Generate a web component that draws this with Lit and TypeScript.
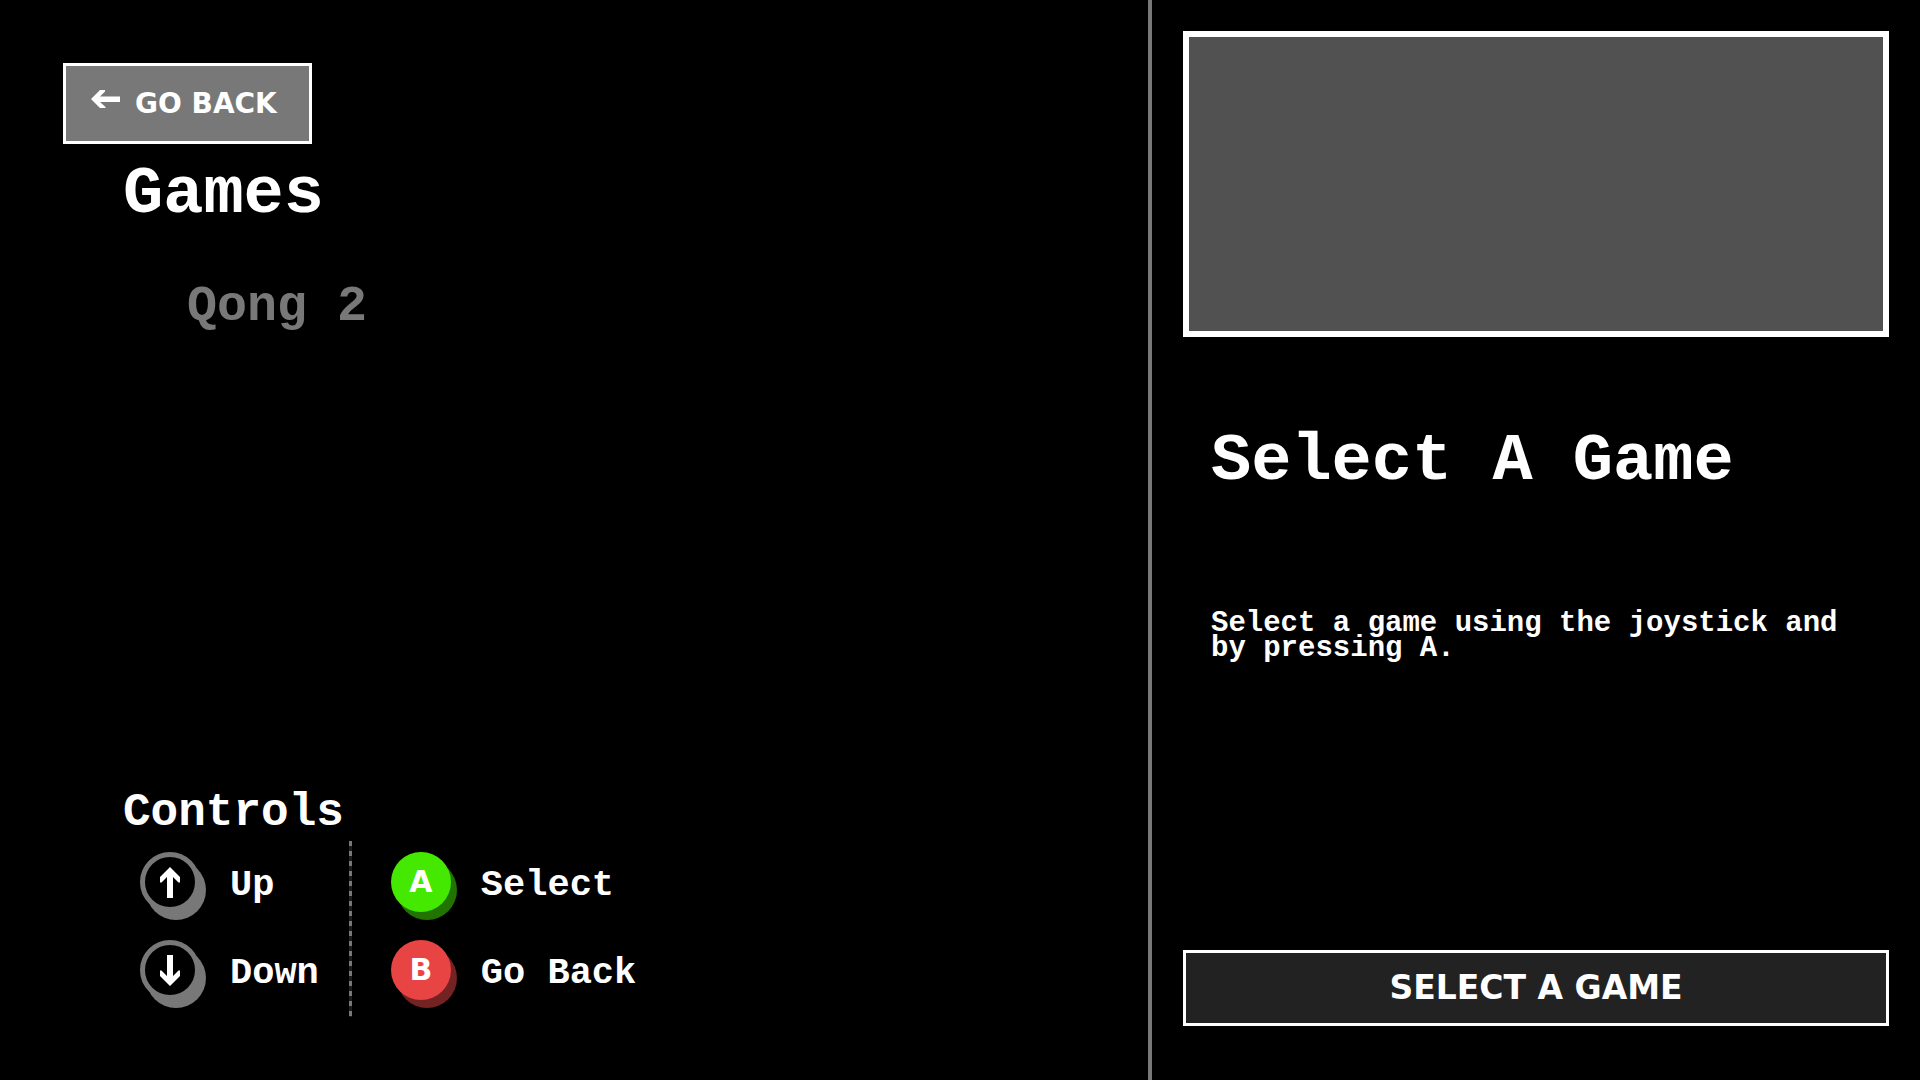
import { LitElement, html, css, svg } from "lit";
import { customElement, property } from "lit/decorators.js";

const upArrow = svg`<path d="M10 0 20 10V15.5H18.5L13 10V31H7V10L1.5 15.5H0V10Z" fill="#fff"/>`;

@customElement("control-hint")
class ControlHint extends LitElement {
  @property() kind = "up";
  @property() label = "";

  static styles = css`
    :host {
      display: flex;
      align-items: center;
      gap: 24px;
      height: 88px;
    }
    .key {
      box-sizing: border-box;
      display: grid;
      place-items: center;
      flex: none;
      width: 60px;
      height: 60px;
      margin: 0 6px 6px 0;
      border-radius: 50%;
      color: #fff;
      font: bold 30px/30px "DejaVu Sans", sans-serif;
    }
    .up,
    .down {
      background: #000;
      border: 5px solid #787878;
      box-shadow: 6px 8px 0 #787878;
    }
    .a {
      background: #45e800;
      box-shadow: 6px 8px 0 #227400;
    }
    .b {
      background: #e84444;
      box-shadow: 6px 8px 0 #742222;
    }
    .down svg {
      transform: rotate(180deg);
    }
    .label {
      white-space: nowrap;
    }
  `;

  render() {
    const arrow = this.kind === "up" || this.kind === "down";
    return html`
      <span class="key ${this.kind}">
        ${arrow
          ? html`<svg width="20" height="31" viewBox="0 0 20 31" aria-hidden="true">${upArrow}</svg>`
          : this.kind.toUpperCase()}
      </span>
      <span class="label">${this.label}</span>
    `;
  }
}

@customElement("app-root")
class AppRoot extends LitElement {
  static styles = css`
    :host {
      display: grid;
      grid-template-columns: minmax(0, 1fr) calc(40% + 4px);
      min-height: 100vh;
      background: #000;
      color: #fff;
      font: bold 37px/44px "Liberation Mono", monospace;
    }
    * {
      box-sizing: border-box;
    }
    h1,
    h2,
    p,
    ul {
      margin: 0;
      padding: 0;
      font-weight: bold;
    }
    .main {
      display: flex;
      flex-direction: column;
      align-items: flex-start;
      padding: 63px;
    }
    .button {
      display: flex;
      align-items: center;
      justify-content: center;
      margin: 0;
      border: 3px solid #fff;
      color: #fff;
      font-family: "DejaVu Sans", sans-serif;
      font-weight: bold;
      cursor: pointer;
    }
    .back {
      gap: 15px;
      height: 81px;
      padding: 0 32px 0 25px;
      background: #787878;
      font-size: 28px;
      line-height: 32px;
    }
    .back svg {
      margin-bottom: 10px;
    }
    .title {
      font-size: 67px;
      line-height: 64px;
    }
    .main .title {
      margin: 18px 0 0 60px;
    }
    .games {
      margin: 56px 0 0 124px;
      list-style: none;
    }
    .game {
      display: block;
      color: #787878;
      font-size: 50px;
      line-height: 50px;
      text-decoration: none;
    }
    .controls {
      margin: auto 0 0 60px;
    }
    .controls h2 {
      margin-bottom: 5px;
      font-size: 46px;
      line-height: 46px;
    }
    .hints {
      display: flex;
    }
    .group {
      padding: 0 30px 0 17px;
    }
    .divider + .group {
      padding-left: 39px;
    }
    .divider {
      width: 3px;
      background: repeating-linear-gradient(#787878 0 5px, #1c1c1c 5px 10px);
    }
    .side {
      display: flex;
      flex-direction: column;
      padding: 31px 31px 54px;
      border-left: 4px solid #787878;
    }
    .preview {
      height: 306px;
      border: 6px solid #fff;
      background: #515151;
    }
    .details {
      flex: 1;
      padding: 92px 28px 0;
    }
    .details p {
      margin-top: 118px;
      font-size: 29px;
      line-height: 25px;
    }
    .start {
      height: 76px;
      background: #222;
      font-size: 33px;
      line-height: 36px;
    }
  `;

  render() {
    return html`
      <main class="main">
        <button class="button back" type="button">
          <svg width="29" height="18" viewBox="0 0 29 18" aria-hidden="true">
            <path d="M0 9 9 0H14V1.500L9 6.500H29V12H9L14.500 17V18H9Z" fill="#fff" />
          </svg>
          <span>GO BACK</span>
        </button>
        <h1 class="title">Games</h1>
        <ul class="games">
          <li><a class="game" href="#qong-2">Qong 2</a></li>
        </ul>
        <section class="controls">
          <h2>Controls</h2>
          <div class="hints">
            <div class="group">
              <control-hint kind="up" label="Up"></control-hint>
              <control-hint kind="down" label="Down"></control-hint>
            </div>
            <div class="divider"></div>
            <div class="group">
              <control-hint kind="a" label="Select"></control-hint>
              <control-hint kind="b" label="Go Back"></control-hint>
            </div>
          </div>
        </section>
      </main>
      <aside class="side">
        <div class="preview"></div>
        <div class="details">
          <h2 class="title">Select A Game</h2>
          <p>Select a game using the joystick and by pressing A.</p>
        </div>
        <button class="button start" type="button">SELECT A GAME</button>
      </aside>
    `;
  }
}
